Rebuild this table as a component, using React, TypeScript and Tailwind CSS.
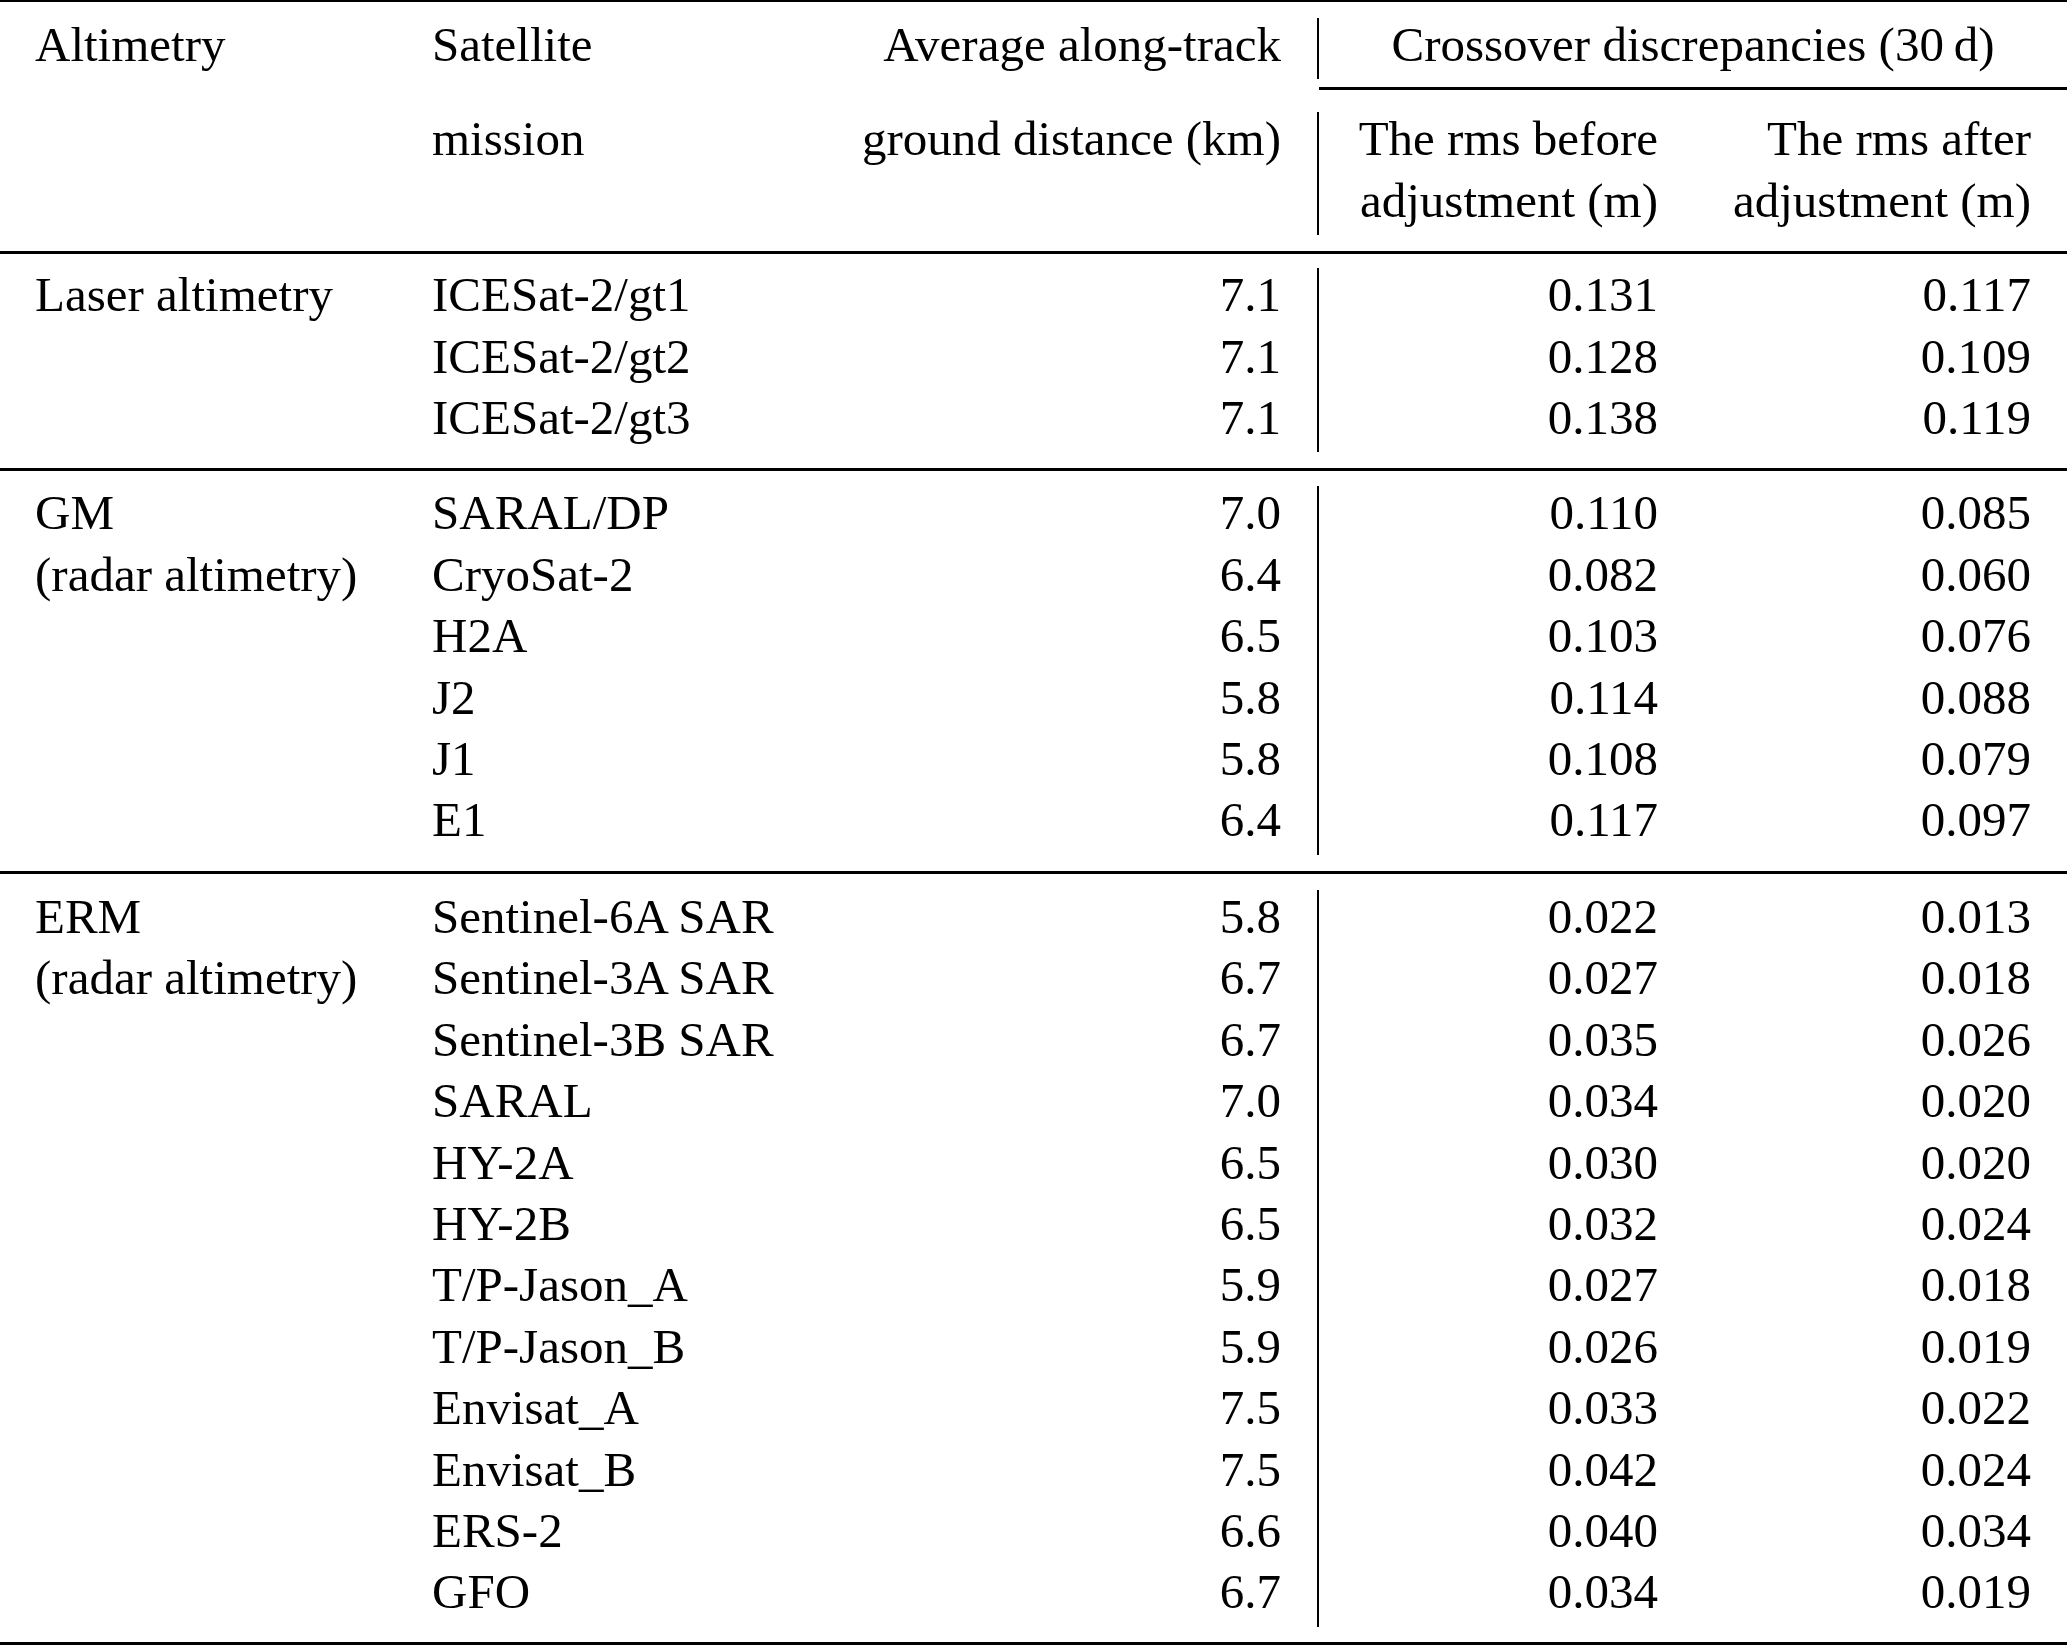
const cols = 'grid grid-cols-[432px_428px_459px_377px_371px]'
// each line is 61.4px tall; text sits a little high in it, as in the original
const line = 'leading-[54.4px] *:pb-[7px]'

type Row = [string, string, string, string, string]

const sections: Row[][] = [
  [
    ['Laser altimetry', 'ICESat-2/gt1', '7.1', '0.131', '0.117'],
    ['', 'ICESat-2/gt2', '7.1', '0.128', '0.109'],
    ['', 'ICESat-2/gt3', '7.1', '0.138', '0.119'],
  ],
  [
    ['GM', 'SARAL/DP', '7.0', '0.110', '0.085'],
    ['(radar altimetry)', 'CryoSat-2', '6.4', '0.082', '0.060'],
    ['', 'H2A', '6.5', '0.103', '0.076'],
    ['', 'J2', '5.8', '0.114', '0.088'],
    ['', 'J1', '5.8', '0.108', '0.079'],
    ['', 'E1', '6.4', '0.117', '0.097'],
  ],
  [
    ['ERM', 'Sentinel-6A SAR', '5.8', '0.022', '0.013'],
    ['(radar altimetry)', 'Sentinel-3A SAR', '6.7', '0.027', '0.018'],
    ['', 'Sentinel-3B SAR', '6.7', '0.035', '0.026'],
    ['', 'SARAL', '7.0', '0.034', '0.020'],
    ['', 'HY-2A', '6.5', '0.030', '0.020'],
    ['', 'HY-2B', '6.5', '0.032', '0.024'],
    ['', 'T/P-Jason_A', '5.9', '0.027', '0.018'],
    ['', 'T/P-Jason_B', '5.9', '0.026', '0.019'],
    ['', 'Envisat_A', '7.5', '0.033', '0.022'],
    ['', 'Envisat_B', '7.5', '0.042', '0.024'],
    ['', 'ERS-2', '6.6', '0.040', '0.034'],
    ['', 'GFO', '6.7', '0.034', '0.019'],
  ],
]

function Rule({ className = '' }: { className?: string }) {
  return <div className={`h-[3px] bg-black ${className}`} />
}

function Line({ r }: { r: Row }) {
  return (
    <div className={`${cols} ${line} whitespace-nowrap`}>
      <div className="pl-[35px]">{r[0]}</div>
      <div>{r[1]}</div>
      <div className="border-r-2 border-black pr-[36px] text-right">{r[2]}</div>
      <div className="pr-[38px] text-right">{r[3]}</div>
      <div className="pr-[36px] text-right">{r[4]}</div>
    </div>
  )
}

function Section({ rows, className }: { rows: Row[]; className: string }) {
  return (
    <div className={className}>
      {rows.map((r, i) => (
        <Line key={i} r={r} />
      ))}
    </div>
  )
}

export default function App() {
  return (
    <div className="min-h-screen bg-white">
      <div className="w-[2067px] font-['Liberation_Serif','Times_New_Roman',serif] text-[49px] text-black">
        <div className="h-[2px] bg-black" />

        {/* header, first line */}
        <div className={`${cols} ${line} mt-[16px] whitespace-nowrap`}>
          <div className="pl-[35px]">Altimetry</div>
          <div>Satellite</div>
          <div className="border-r-2 border-black pr-[36px] text-right">Average along-track</div>
          <div className="col-span-2 text-center">Crossover discrepancies (30{'\u2009'}d)</div>
        </div>
        <div className={cols}>
          <div className="col-span-3" />
          <div className="col-span-2 pt-[8px] pb-[22px]">
            <Rule />
          </div>
        </div>

        {/* header, second and third lines */}
        <Line r={['', 'mission', 'ground distance (km)', 'The rms before', 'The rms after']} />
        <Line r={['', '', '', 'adjustment (m)', 'adjustment (m)']} />
        <Rule className="mt-[16px]" />

        <Section rows={sections[0]} className="pt-[14px] pb-[16px]" />
        <Rule />
        <Section rows={sections[1]} className="pt-[15px] pb-[16px]" />
        <Rule />
        <Section rows={sections[2]} className="pt-[16px] pb-[15px]" />
        <Rule />
      </div>
    </div>
  )
}
